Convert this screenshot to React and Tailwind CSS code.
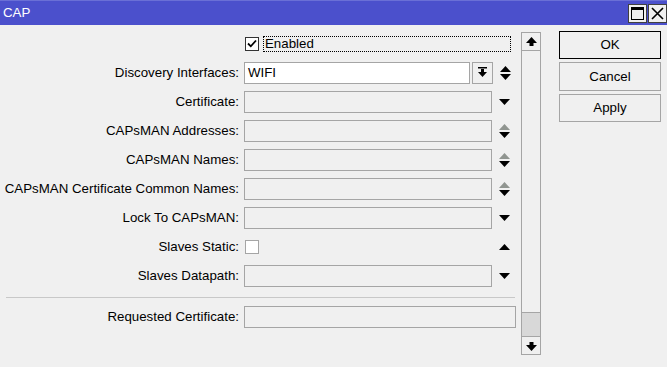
import React from "react";

const Down = ({ grey }) => (
  <svg width="11" height="6" viewBox="0 0 11 6">
    <polygon points="0,0 11,0 5.5,6" fill={grey ? "#909590" : "#000"} />
  </svg>
);

const Up = ({ grey }) => (
  <svg width="11" height="6" viewBox="0 0 11 6">
    <polygon points="0,6 11,6 5.5,0" fill={grey ? "#909590" : "#000"} />
  </svg>
);

const UpDown = ({ greyUp }) => (
  <div className="flex flex-col items-center gap-[2px]">
    <Up grey={greyUp} />
    <Down />
  </div>
);

const Field = ({ value = "", white, width = "w-[248px]" }) => (
  <div
    className={`${width} h-[22px] border border-[#a5a5a5] ${white ? "bg-white" : "bg-[#f0f0f0]"} flex items-center px-[3px]`}
  >
    {value}
  </div>
);

const Row = ({ label, children, arrow }) => (
  <div className="h-[29px] flex items-center">
    <div className="w-[240px] text-right pr-[1px] whitespace-nowrap">{label}</div>
    <div className="ml-[4px] flex items-center">{children}</div>
    {arrow !== undefined && (
      <div className="w-[24px] flex justify-center">{arrow}</div>
    )}
  </div>
);

export default function App() {
  return (
    <div
      className="w-[667px] h-[367px] bg-[#f0f0f0] text-black text-[13.3px] overflow-hidden"
      style={{ fontFamily: '"Liberation Sans", Arial, sans-serif' }}
    >
      {/* Title bar */}
      <div className="h-[25px] bg-[#4b50cc] border-t border-[#6a6fd6] flex items-center pl-[3px] text-white">
        <span className="flex-1">CAP</span>
        <div className="flex gap-[1px]">
          <button className="w-[19px] h-[19px] bg-[#f0f0f0] border border-[#404040] flex items-center justify-center">
            <div className="w-[13px] h-[13px] border border-black border-t-[3px]" />
          </button>
          <button className="w-[19px] h-[19px] bg-[#f0f0f0] border border-[#404040] flex items-center justify-center">
            <svg width="13" height="13" viewBox="0 0 13 13">
              <path d="M1 1 L12 12 M12 1 L1 12" stroke="#000" strokeWidth="1.6" />
            </svg>
          </button>
        </div>
      </div>

      <div className="flex">
        {/* Form */}
        <div className="w-[517px] pt-[4px]">
          <div className="h-[29px] flex items-center">
            <div className="w-[245px]" />
            <div className="w-[14px] h-[14px] border border-[#333] bg-white flex items-center justify-center">
              <svg width="10" height="9" viewBox="0 0 10 9">
                <path d="M1 4.5 L3.8 7.3 L9 1.5" stroke="#000" strokeWidth="1.8" fill="none" />
              </svg>
            </div>
            <div className="ml-[4px] w-[248px] h-[16px] border border-dotted border-black flex items-center pl-[1px]">
              Enabled
            </div>
          </div>

          <Row label="Discovery Interfaces:" arrow={<UpDown />}>
            <Field value="WIFI" white width="w-[226px]" />
            <div className="ml-[2px] w-[21px] h-[22px] border border-[#a5a5a5] flex items-center justify-center">
              <svg width="9" height="11" viewBox="0 0 9 11">
                <rect x="0" y="0" width="9" height="1.5" fill="#000" />
                <rect x="3" y="2" width="3" height="4" fill="#000" />
                <polygon points="0,5 9,5 4.5,10" fill="#000" />
              </svg>
            </div>
          </Row>
          <Row label="Certificate:" arrow={<Down />}>
            <Field />
          </Row>
          <Row label="CAPsMAN Addresses:" arrow={<UpDown greyUp />}>
            <Field />
          </Row>
          <Row label="CAPsMAN Names:" arrow={<UpDown greyUp />}>
            <Field />
          </Row>
          <Row label="CAPsMAN Certificate Common Names:" arrow={<UpDown greyUp />}>
            <Field />
          </Row>
          <Row label="Lock To CAPsMAN:" arrow={<Down />}>
            <Field />
          </Row>
          <Row label="Slaves Static:" arrow={<Up />}>
            <div className="w-[14px] h-[14px] border border-[#a5a5a5] bg-white ml-[1px]" />
            <div className="w-[233px]" />
          </Row>
          <Row label="Slaves Datapath:" arrow={<Down />}>
            <Field />
          </Row>

          <div className="mt-[7px] ml-[6px] w-[509px] h-px bg-[#c8c8c8]" />
          <div className="mt-[4px]">
            <Row label="Requested Certificate:">
              <Field width="w-[272px]" />
            </Row>
          </div>
        </div>

        {/* Scrollbar */}
        <div className="ml-[4px] mt-[7px] w-[20px] h-[323px] border-x border-[#a5a5a5] flex flex-col">
          <div className="h-[19px] border border-[#a5a5a5] -mx-px flex items-center justify-center">
            <svg width="11" height="10" viewBox="0 0 11 10">
              <polygon points="0,6 11,6 5.5,0" fill="#000" />
              <rect x="3.5" y="5" width="4" height="4" fill="#000" />
            </svg>
          </div>
          <div className="flex-1" />
          <div className="h-[24px] bg-[#d8d8d8] border-t border-[#a5a5a5]" />
          <div className="h-[19px] border border-[#a5a5a5] -mx-px flex items-center justify-center">
            <svg width="11" height="10" viewBox="0 0 11 10">
              <rect x="3.5" y="1" width="4" height="4" fill="#000" />
              <polygon points="0,4 11,4 5.5,10" fill="#000" />
            </svg>
          </div>
        </div>

        {/* Buttons */}
        <div className="ml-[18px] mt-[6px] flex flex-col gap-[3px]">
          <button className="w-[102px] h-[28px] border border-black bg-[#f0f0f0]">OK</button>
          <button className="w-[102px] h-[29px] border border-[#a5a5a5] bg-[#f0f0f0]">Cancel</button>
          <button className="w-[102px] h-[28px] border border-[#a5a5a5] bg-[#f0f0f0]">Apply</button>
        </div>
      </div>
    </div>
  );
}
